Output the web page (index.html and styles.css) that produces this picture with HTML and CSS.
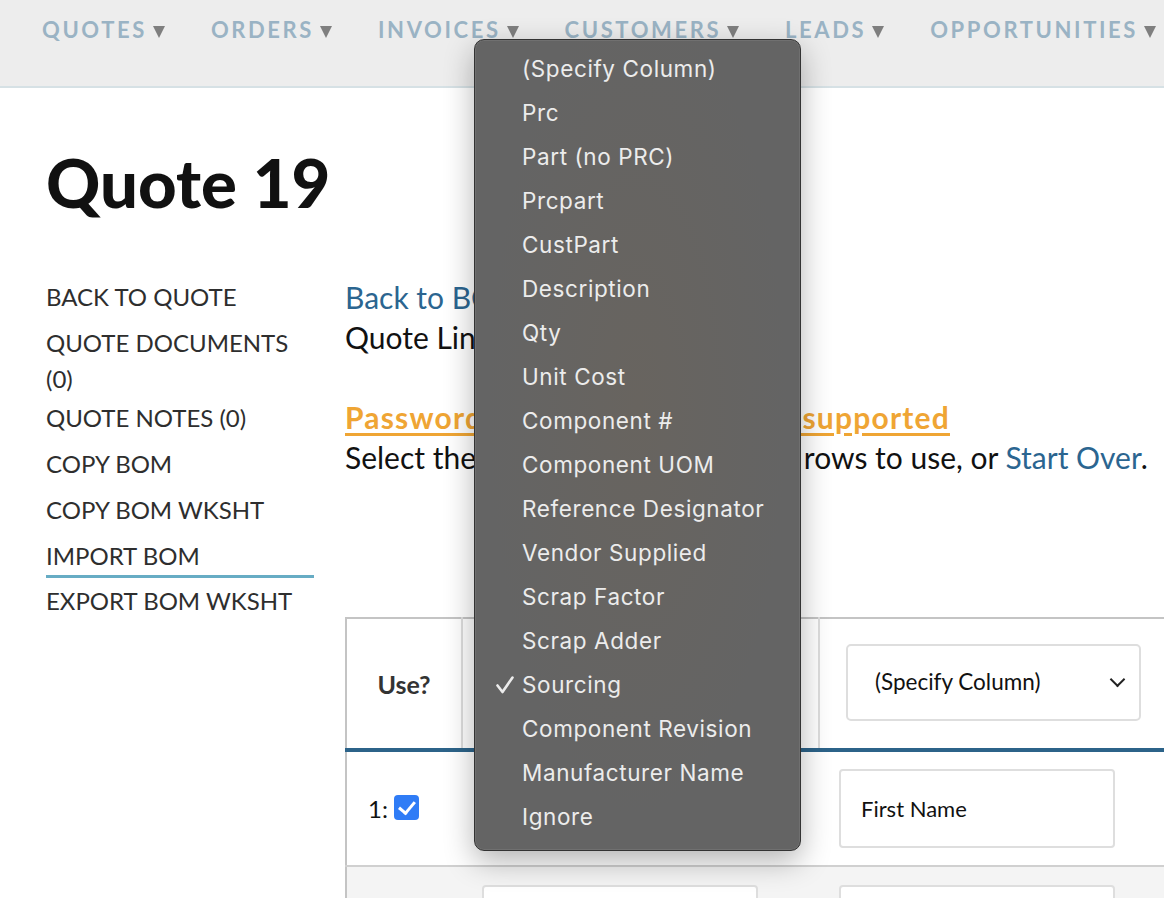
FILE: index.html
```html
<!DOCTYPE html>
<html lang="en">
  <head>
    <meta name="viewport" content="width=device-width, initial-scale=1.0" />
    <title>Quote 19 - Import BOM</title>
    <!-- Stylesheet -->
    <link rel="stylesheet" href="styles.css">
  </head>
  <body>
    <header class="topnav">
      <a href="#">QUOTES<span class="caret"></span></a>
      <a href="#">ORDERS<span class="caret"></span></a>
      <a href="#">INVOICES<span class="caret"></span></a>
      <a href="#">CUSTOMERS<span class="caret"></span></a>
      <a href="#">LEADS<span class="caret"></span></a>
      <a href="#">OPPORTUNITIES<span class="caret"></span></a>
    </header>

    <div class="page">
      <h1>Quote 19</h1>
      <div class="layout">
        <ul class="sidebar">
          <li><a href="#">BACK TO QUOTE</a></li>
          <li class="wrap"><a href="#">QUOTE DOCUMENTS (0)</a></li>
          <li><a href="#">QUOTE NOTES (0)</a></li>
          <li><a href="#">COPY BOM</a></li>
          <li><a href="#">COPY BOM WKSHT</a></li>
          <li class="active"><a href="#">IMPORT BOM</a></li>
          <li><a href="#">EXPORT BOM WKSHT</a></li>
        </ul>

        <div class="content">
          <p><a class="link" href="#">Back to BOM</a></p>
          <p>Quote Line 1: BOM import</p>
          <p class="spacer"></p>
          <p><a class="warn" href="#">Password protected files aren't supported</a></p>
          <p>Select the columns you need, then rows to use, or <a class="link" href="#">Start Over</a>.</p>

          <table class="bom-table">
            <thead>
              <tr>
                <th class="col-use">Use?</th>
                <th>
                  <div class="fake-select">Sourcing<span class="chev"></span></div>
                </th>
                <th>
                  <div class="fake-select">(Specify Column)<span class="chev"></span></div>
                </th>
              </tr>
            </thead>
            <tbody>
              <tr>
                <td class="col-use">1: <span class="check"></span></td>
                <td><div class="cell-input">Sourcing</div></td>
                <td><div class="cell-input">First Name</div></td>
              </tr>
              <tr class="alt">
                <td class="col-use">2: <span class="check"></span></td>
                <td><div class="cell-input"></div></td>
                <td><div class="cell-input"></div></td>
              </tr>
            </tbody>
          </table>
        </div>
      </div>
    </div>

    <!-- native select popup, open over the table -->
    <ul class="select-popup">
      <li>(Specify Column)</li>
      <li>Prc</li>
      <li>Part (no PRC)</li>
      <li>Prcpart</li>
      <li>CustPart</li>
      <li>Description</li>
      <li>Qty</li>
      <li>Unit Cost</li>
      <li>Component #</li>
      <li>Component UOM</li>
      <li>Reference Designator</li>
      <li>Vendor Supplied</li>
      <li>Scrap Factor</li>
      <li>Scrap Adder</li>
      <li class="selected">
        <svg class="tick" width="20" height="20" viewBox="0 0 20 20">
          <path d="M2.5 10.5 L7.5 17 L17.5 2.5" fill="none" stroke="#ececec" stroke-width="2.6" stroke-linecap="round" stroke-linejoin="round" />
        </svg>
        Sourcing
      </li>
      <li>Component Revision</li>
      <li>Manufacturer Name</li>
      <li>Ignore</li>
    </ul>
  </body>
</html>
```

FILE: styles.css
```css
* {
  padding: 0;
  margin: 0;
  box-sizing: border-box;
}
body {
  font-family: "Lato", "Open Sans", sans-serif;
  background-color: #ffffff;
  color: #111111;
  width: 1164px;
  height: 898px;
  overflow: hidden;
  position: relative;
}
a {
  text-decoration: none;
  color: inherit;
}

/* top navigation */
.topnav {
  height: 88px;
  background-color: #ededed;
  border-bottom: 2px solid #d6e1e5;
  display: flex;
  gap: 46px;
  padding: 16px 0 0 42px;
  white-space: nowrap;
}
.topnav a {
  font-size: 22px;
  font-weight: 700;
  letter-spacing: 2.6px;
  color: #9ab3c4;
}
.caret {
  display: inline-block;
  width: 0;
  height: 0;
  border-left: 6.5px solid transparent;
  border-right: 6.5px solid transparent;
  border-top: 12px solid #7f7f7f;
  margin-left: 6px;
}

/* page */
.page {
  padding-left: 46px;
}
h1 {
  font-size: 67px;
  font-weight: 900;
  line-height: 1;
  margin-top: 61px;
  color: #111111;
}
.layout {
  display: flex;
  gap: 31px;
  margin-top: 58px;
}
.sidebar {
  list-style: none;
  width: 268px;
  flex: none;
}
.sidebar li {
  font-size: 24px;
  line-height: 36px;
  padding: 5px 0;
  color: #2e2e2e;
}
.sidebar li.wrap {
  margin-bottom: -7px;
}
.sidebar li.active {
  border-bottom: 3px solid #67acc4;
  padding-bottom: 1px;
}

.content {
  flex: none;
  width: 840px;
  font-size: 30px;
  line-height: 40px;
  padding-top: 3px;
}
.content p {
  white-space: nowrap;
}
.spacer {
  height: 40px;
}
.link {
  color: #2b6590;
}
.warn {
  color: #efa534;
  font-weight: 700;
  letter-spacing: 1.2px;
  text-decoration: underline;
  text-underline-offset: 4px;
}

/* bom table */
.bom-table {
  margin-top: 140px;
  border-collapse: collapse;
  border: 2px solid #c4c4c4;
  border-bottom: none;
  table-layout: fixed;
  width: 830px;
}
.bom-table th {
  height: 132px;
  border-right: 2px solid #dddddd;
  border-bottom: 4px solid #2c6389;
  padding: 0 0 3px 26px;
  text-align: left;
}
.bom-table th:nth-child(1) {
  width: 116px;
}
.bom-table th:nth-child(2),
.bom-table th:nth-child(3) {
  width: 357px;
}
.bom-table th.col-use {
  text-align: center;
  padding: 0;
  font-size: 25px;
  font-weight: 700;
  color: #333333;
}
.bom-table td {
  height: 116px;
  padding: 0 0 0 20px;
  border-bottom: 2px solid #d0d0d0;
}
.bom-table td.col-use {
  padding-left: 21px;
  font-size: 24px;
  color: #111111;
}
.bom-table tr.alt td {
  background-color: #f4f4f4;
}

.fake-select {
  width: 295px;
  height: 77px;
  border: 2px solid #dedede;
  border-radius: 5px;
  display: flex;
  align-items: center;
  justify-content: space-between;
  padding: 0 16px 0 27px;
  font-size: 22.5px;
  font-weight: 400;
  color: #111111;
  background-color: #ffffff;
}
.chev {
  width: 11px;
  height: 11px;
  border-right: 2px solid #222222;
  border-bottom: 2px solid #222222;
  transform: rotate(45deg);
  margin-top: -6px;
}
.cell-input {
  width: 276px;
  height: 79px;
  border: 2px solid #dedede;
  border-radius: 4px;
  background-color: #ffffff;
  padding-left: 20px;
  display: flex;
  align-items: center;
  font-size: 22px;
  color: #111111;
}
.check {
  display: inline-block;
  width: 25px;
  height: 25px;
  border-radius: 4px;
  background-color: #2f7cf6;
  vertical-align: -2px;
  position: relative;
}
.check::after {
  content: "";
  position: absolute;
  left: 8px;
  top: 3px;
  width: 7px;
  height: 13px;
  border-right: 3px solid #ffffff;
  border-bottom: 3px solid #ffffff;
  transform: rotate(40deg);
}

/* open select popup */
.select-popup {
  position: absolute;
  left: 474px;
  top: 39px;
  width: 327px;
  height: 812px;
  list-style: none;
  padding: 7px 0 0 0;
  background: radial-gradient(ellipse at 50% 45%, #68645f 0%, #646464 65%);
  border: 1px solid #333333;
  border-radius: 10px;
  box-shadow: 0 10px 30px rgba(0, 0, 0, 0.3), inset 0 0 0 1px rgba(255, 255, 255, 0.08);
  font-family: "Inter", "Liberation Sans", sans-serif;
  font-size: 22.5px;
  letter-spacing: 0.6px;
  color: #ececec;
}
.select-popup li {
  height: 44px;
  line-height: 44px;
  padding-left: 47px;
  position: relative;
}
.tick {
  position: absolute;
  left: 20px;
  top: 12px;
}
```
